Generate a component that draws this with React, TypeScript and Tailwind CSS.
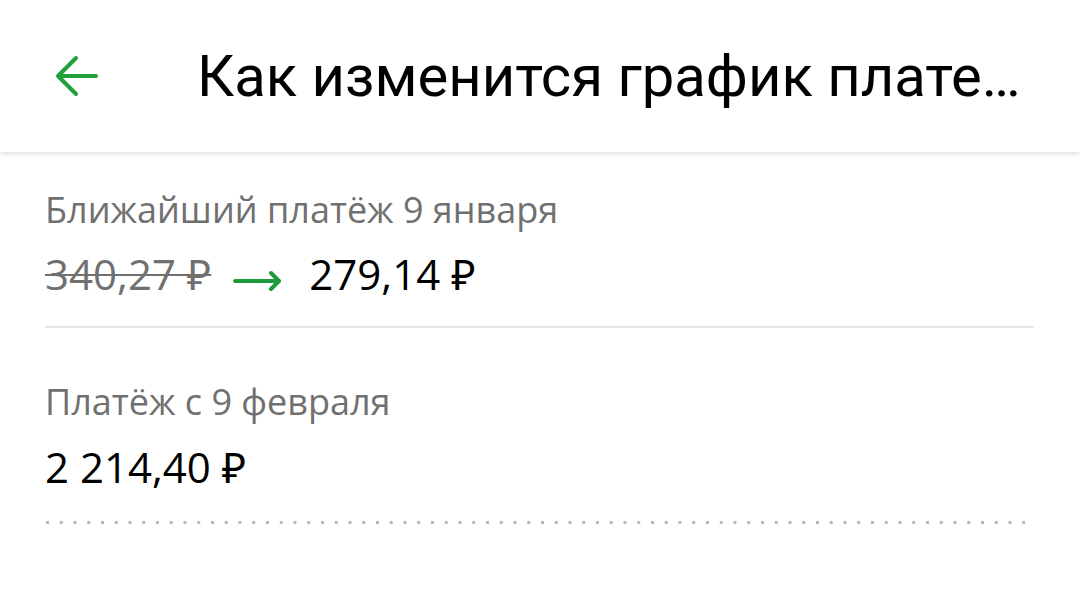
import React from "react";

function BackArrow() {
  return (
    <svg width="46" height="44" viewBox="0 0 46 44" fill="none">
      <path
        d="M42 22H4M22 4L4 22l18 18"
        stroke="#21a038"
        strokeWidth="4"
        strokeLinecap="round"
        strokeLinejoin="round"
      />
    </svg>
  );
}

function LongArrow() {
  return (
    <svg width="50" height="22" viewBox="0 0 50 22" fill="none">
      <path
        d="M2 11H46M38 3l8 8-8 8"
        stroke="#1f9a3a"
        strokeWidth="4"
        strokeLinecap="round"
        strokeLinejoin="round"
      />
    </svg>
  );
}

export default function App() {
  return (
    <div
      className="w-[1080px] h-[596px] bg-white overflow-hidden"
      style={{ fontFamily: "'Open Sans', 'Noto Sans', sans-serif" }}
    >
      <header className="h-[152px] bg-white flex items-center shadow-[0_2px_5px_rgba(0,0,0,0.12)] relative z-10">
        <div className="w-[197px] pl-[54px] flex items-center">
          <BackArrow />
        </div>
        <h1
          className="text-[58px] text-black whitespace-nowrap leading-[60px]"
          style={{ fontFamily: "Roboto, 'Open Sans', sans-serif" }}
        >
          Как изменится график плате…
        </h1>
      </header>

      <main className="px-[45px] pt-[34px]">
        <div className="text-[36px] text-[#707070] leading-[48px]">Ближайший платёж 9 января</div>
        <div className="flex items-center mt-[16px] h-[48px]">
          <span className="text-[42px] text-[#707070] line-through decoration-[2px] leading-[48px]">
            340,27 ₽
          </span>
          <span className="ml-[22px] mr-[26px] mt-[14px] flex">
            <LongArrow />
          </span>
          <span className="text-[42px] text-black leading-[48px]">279,14 ₽</span>
        </div>
        <div className="mt-[28px] mr-[1px] h-[2px] bg-[#e6e6e6]" />

        <div className="text-[36px] text-[#707070] leading-[48px] mt-[50px]">Платёж с 9 февраля</div>
        <div className="text-[42px] text-black leading-[48px] mt-[17px]">2 214,40 ₽</div>
        <div className="mt-[30px] mr-[10px] ml-[1px] h-[3px] bg-[linear-gradient(to_right,#b8b8b8_3px,transparent_3px)] bg-[length:13.75px_3px] bg-repeat-x" />
      </main>
    </div>
  );
}
